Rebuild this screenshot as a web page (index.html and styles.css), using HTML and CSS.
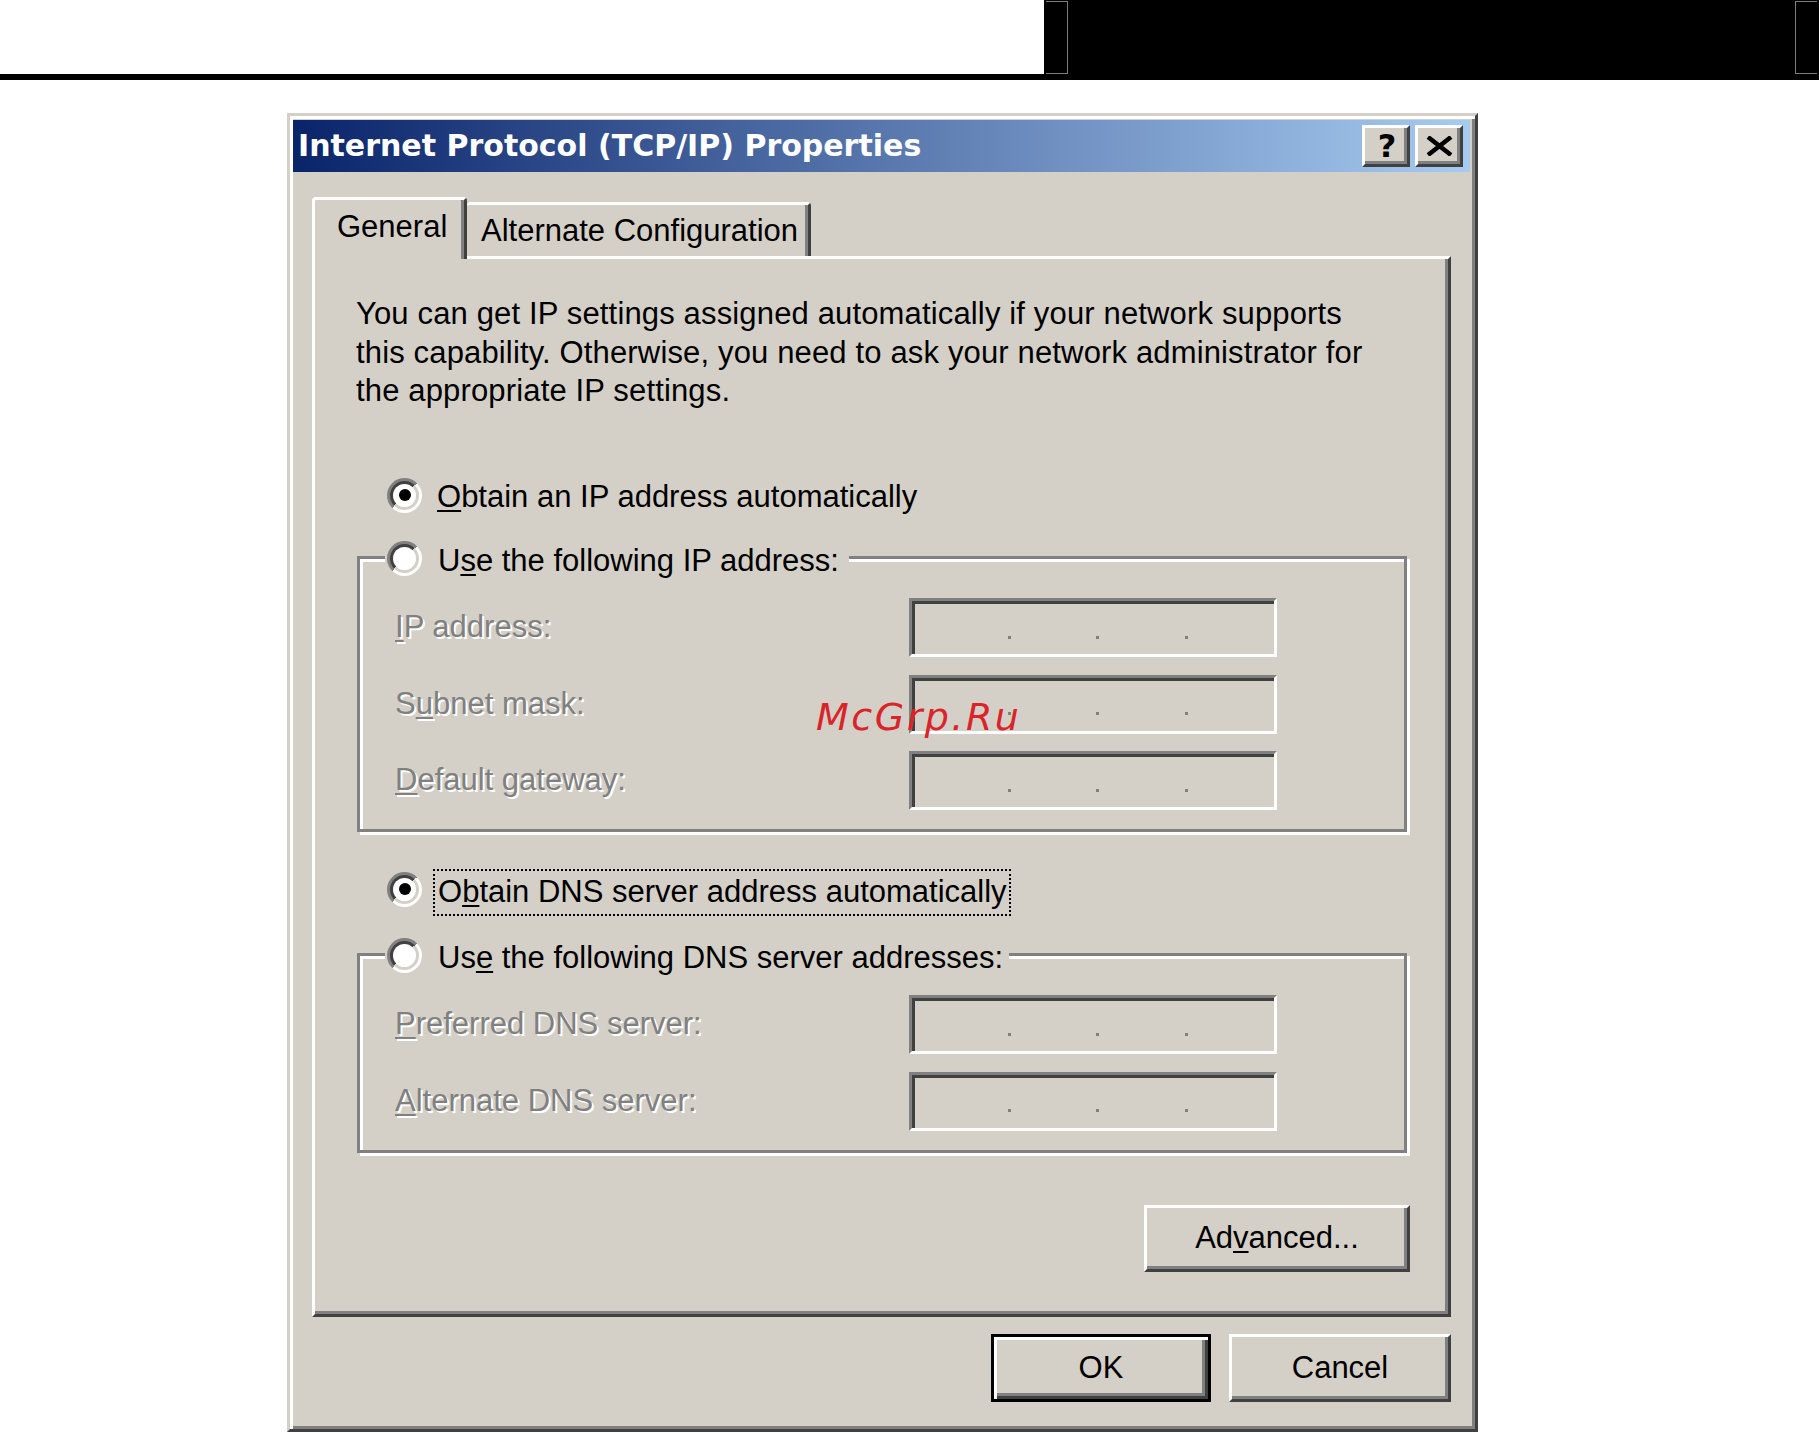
FILE: index.html
```html
<!DOCTYPE html>
<html lang="en">
<head>
<meta charset="utf-8">
<title>Internet Protocol (TCP/IP) Properties</title>
<link rel="stylesheet" href="styles.css">
</head>
<body>
<div class="masthead">
  <div class="mast-white"></div>
  <div class="mast-black">
    <div class="bracket bracket-l"></div>
    <div class="bracket bracket-r"></div>
  </div>
</div>

<div class="dialog">
  <div class="titlebar">
    <div class="title">Internet Protocol (TCP/IP) Properties</div>
    <div class="tbtns">
      <div class="tbtn tbtn-help"><span class="help-glyph">?</span></div>
      <div class="tbtn tbtn-close">
        <svg width="27" height="20" viewBox="0 0 27 20"><path d="M2 1 L25 19 M25 1 L2 19" stroke="#000" stroke-width="4.5" fill="none"/></svg>
      </div>
    </div>
  </div>

  <div class="dlg-body">
    <div class="tabs">
      <div class="tab tab-sel">General</div>
      <div class="tab tab-alt">Alternate Configuration</div>
    </div>
    <div class="panel">
      <p class="intro">You can get IP settings assigned automatically if your network supports<br>this capability. Otherwise, you need to ask your network administrator for<br>the appropriate IP settings.</p>

      <div class="opt opt-first">
        <div class="radio"><div class="radio-in"><div class="radio-face"><div class="radio-dot"></div></div></div></div>
        <span class="opt-label"><u>O</u>btain an IP address automatically</span>
      </div>

      <div class="group group-ip">
        <div class="group-head head-ip">
          <div class="radio"><div class="radio-in"><div class="radio-face"></div></div></div>
          <span class="opt-label">U<u>s</u>e the following IP address:</span>
        </div>
        <div class="field">
          <span class="field-label"><u>I</u>P address:</span>
          <div class="ipbox"><i class="dot"></i><i class="dot"></i><i class="dot"></i></div>
        </div>
        <div class="field">
          <span class="field-label">S<u>u</u>bnet mask:</span>
          <div class="ipbox"><i class="dot"></i><i class="dot"></i><i class="dot"></i></div>
        </div>
        <div class="field">
          <span class="field-label"><u>D</u>efault gateway:</span>
          <div class="ipbox"><i class="dot"></i><i class="dot"></i><i class="dot"></i></div>
        </div>
      </div>

      <div class="opt opt-focus">
        <div class="radio"><div class="radio-in"><div class="radio-face"><div class="radio-dot"></div></div></div></div>
        <span class="opt-label">O<u>b</u>tain DNS server address automatically</span>
      </div>

      <div class="group group-dns">
        <div class="group-head head-dns">
          <div class="radio"><div class="radio-in"><div class="radio-face"></div></div></div>
          <span class="opt-label">Us<u>e</u> the following DNS server addresses:</span>
        </div>
        <div class="field">
          <span class="field-label"><u>P</u>referred DNS server:</span>
          <div class="ipbox"><i class="dot"></i><i class="dot"></i><i class="dot"></i></div>
        </div>
        <div class="field">
          <span class="field-label"><u>A</u>lternate DNS server:</span>
          <div class="ipbox"><i class="dot"></i><i class="dot"></i><i class="dot"></i></div>
        </div>
      </div>

      <button class="btn btn-adv" type="button">Ad<u>v</u>anced...</button>
    </div>

    <div class="actions">
      <button class="btn btn-ok" type="button">OK</button>
      <button class="btn btn-cancel" type="button">Cancel</button>
    </div>
  </div>
</div>

<div class="watermark">McGrp.Ru</div>
</body>
</html>
```

FILE: styles.css
```css
* { box-sizing: border-box; }
html, body { margin: 0; padding: 0; }
body {
  position: relative;
  background: #fff;
  font-family: "Liberation Sans", Arial, sans-serif;
  font-size: 31px;
  color: #000;
  min-height: 1433px;
  overflow: hidden;
}
u { text-decoration-thickness: 2px; text-underline-offset: 3px; }

/* top strip */
.masthead { display: flex; height: 80px; }
.mast-white { flex: 0 0 1044px; height: 80px; background: #fff; border-bottom: 6px solid #000; }
.mast-black {
  flex: 1;
  background: #000;
  display: flex;
  justify-content: space-between;
  align-items: flex-start;
  padding: 1px 2px 0 2px;
}
.bracket { width: 22px; height: 73px; border: 1px solid #7c7c7c; }
.bracket-l { border-left: none; }
.bracket-r { border-right: none; }

/* dialog */
.dialog {
  margin: 33px 0 0 287px;
  width: 1191px;
  background: #d4d0c8;
  border: 3px solid;
  border-color: #d4d0c8 #404040 #404040 #d4d0c8;
  box-shadow: inset 3px 3px 0 #fff, inset -3px -3px 0 #808080;
  padding: 4px 5px 0 3px;
}
.titlebar {
  display: flex;
  align-items: flex-start;
  height: 52px;
  background: linear-gradient(to right, #0a246a, #a6caf0);
  padding: 0 7px 0 5px;
}
.title {
  flex: 1;
  font-family: "DejaVu Sans", sans-serif;
  font-weight: bold;
  font-size: 30px;
  line-height: 51px;
  color: #fff;
  white-space: nowrap;
}
.tbtns { display: flex; gap: 5px; margin-top: 5px; }
.tbtn {
  width: 48px;
  height: 42px;
  background: #d4d0c8;
  border: 3px solid;
  border-color: #fff #404040 #404040 #fff;
  box-shadow: inset -3px -3px 0 #808080;
  display: flex;
  align-items: center;
  justify-content: center;
}
.tbtn-help { padding-left: 2px; }
.help-glyph {
  font-family: "DejaVu Sans", sans-serif;
  font-weight: bold;
  font-size: 32px;
  line-height: 1;
}
.tbtn-close svg { display: block; }

.dlg-body { padding: 25px 19px 27px 19px; }

/* tabs */
.tabs { display: flex; align-items: flex-end; height: 59px; }
.tab {
  background: #d4d0c8;
  border-top: 3px solid #fff;
  border-right: 3px solid #404040;
  box-shadow: inset -3px 0 0 #808080;
  white-space: nowrap;
  line-height: 38.5px;
  border-top-left-radius: 4px;
  border-top-right-radius: 4px;
}
.tab-sel {
  position: relative;
  z-index: 1;
  width: 155px;
  height: 62px;
  margin-bottom: -3px;
  border-left: 3px solid #fff;
  padding: 8px 0 0 22px;
}
.tab-alt {
  width: 344px;
  height: 54px;
  padding: 7px 0 0 14px;
}

.panel {
  display: flex;
  flex-direction: column;
  background: #d4d0c8;
  border: 3px solid;
  border-color: #fff #404040 #404040 #fff;
  box-shadow: inset -3px -3px 0 #808080;
  padding: 36px 0 42px 0;
}
.intro {
  margin: 0 0 0 41px;
  line-height: 38.5px;
  letter-spacing: 0.15px;
  white-space: nowrap;
}

/* radios */
.opt { display: flex; align-items: flex-start; margin-left: 72px; }
.opt-first { margin-top: 67px; }
.opt-label { line-height: 38.5px; white-space: nowrap; }
.opt-first .opt-label { margin-left: 15px; }
.opt-focus { margin-top: 37px; }
.opt-focus .radio { margin-top: 2.5px; }
.opt-focus .opt-label {
  margin-left: 11px;
  border: 2px dotted #000;
  padding: 2px 2px 2.5px 3px;
}

.radio {
  flex: none;
  width: 35px;
  height: 35px;
  border-radius: 50%;
  padding: 3px;
  background: linear-gradient(135deg, #808080 50%, #ffffff 50%);
}
.radio-in {
  width: 100%;
  height: 100%;
  border-radius: 50%;
  padding: 3px;
  background: linear-gradient(135deg, #404040 50%, #d4d0c8 50%);
}
.radio-face {
  width: 100%;
  height: 100%;
  border-radius: 50%;
  background: #fff;
  display: flex;
  align-items: center;
  justify-content: center;
}
.radio-dot { width: 12px; height: 12px; border-radius: 50%; background: #000; }

/* group boxes */
.group {
  margin: 40px 41px 0 42px;
  border: 3px solid #808080;
  box-shadow: inset 3px 3px 0 #fff, 3px 3px 0 #fff;
  padding-bottom: 19px;
}
.group-dns { margin-top: 37px; }
.group-head {
  display: flex;
  align-items: flex-start;
  width: max-content;
  height: 40px;
  margin: -18.5px 0 0 25px;
  padding: 0 10px 0 2px;
  background: #d4d0c8;
}
.head-dns { padding-right: 6px; }
.group-head .opt-label { margin: 1.5px 0 0 16px; }

.field {
  display: flex;
  align-items: center;
  height: 59px;
  margin-top: 17.5px;
  padding-left: 35px;
}
.field-label {
  flex: 0 0 514px;
  color: #808080;
  text-shadow: 2px 2px 0 #fff;
  line-height: 38.5px;
  white-space: nowrap;
}
.ipbox {
  flex: 0 0 368px;
  height: 59px;
  border: 3px solid;
  border-color: #808080 #fff #fff #808080;
  box-shadow: inset 3px 3px 0 #404040;
  display: flex;
  align-items: flex-end;
  gap: 85.5px;
  padding: 0 0 15.5px 95.5px;
}
.dot { display: block; width: 3px; height: 3px; background: #808080; }

/* buttons */
.btn {
  font: inherit;
  color: #000;
  background: #d4d0c8;
  border: 3px solid;
  border-color: #fff #404040 #404040 #fff;
  box-shadow: inset -3px -3px 0 #808080;
  padding: 0;
  margin: 0;
  line-height: 38.5px;
  display: flex;
  align-items: center;
  justify-content: center;
}
.btn-adv {
  align-self: flex-end;
  width: 266px;
  height: 67px;
  margin: 52.5px 38px 0 0;
}
.actions {
  display: flex;
  justify-content: flex-end;
  gap: 18px;
  margin-top: 17px;
}
.btn-ok {
  width: 220px;
  height: 68px;
  border: 3px solid #000;
  box-shadow: inset 3px 3px 0 #fff, inset -3px -3px 0 #404040, inset -6px -6px 0 #808080;
}
.btn-cancel { width: 222px; height: 68px; }

/* watermark overlay */
.watermark {
  position: absolute;
  left: 816px;
  top: 698px;
  font-family: "DejaVu Sans", sans-serif;
  font-style: italic;
  font-size: 38px;
  line-height: 38px;
  letter-spacing: 2.5px;
  color: #d9242a;
  white-space: nowrap;
}
```
